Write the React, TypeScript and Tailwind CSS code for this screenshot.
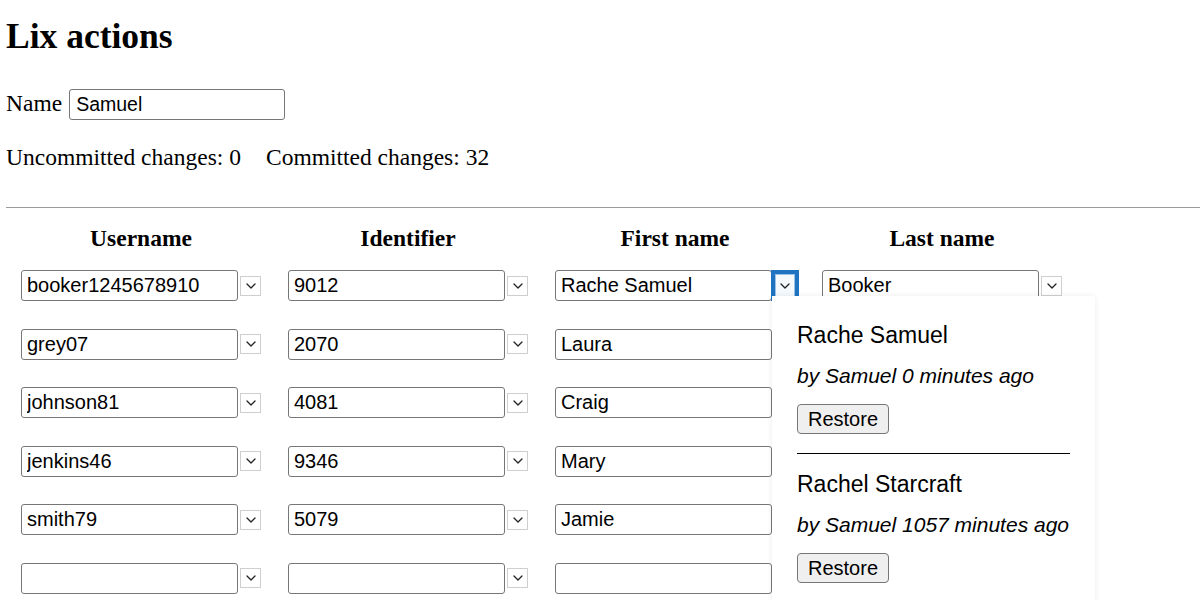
import React from 'react';

const rows = [
  { username: 'booker1245678910', identifier: '9012', first: 'Rache Samuel', last: 'Booker' },
  { username: 'grey07', identifier: '2070', first: 'Laura', last: '' },
  { username: 'johnson81', identifier: '4081', first: 'Craig', last: '' },
  { username: 'jenkins46', identifier: '9346', first: 'Mary', last: '' },
  { username: 'smith79', identifier: '5079', first: 'Jamie', last: '' },
  { username: '', identifier: '', first: '', last: '' },
];

const history = [
  { value: 'Rache Samuel', meta: 'by Samuel 0 minutes ago' },
  { value: 'Rachel Starcraft', meta: 'by Samuel 1057 minutes ago' },
];

const Chevron = () => (
  <svg width="10" height="6" viewBox="0 0 10 6" fill="none" stroke="#222" strokeWidth="1.3" strokeLinecap="round" strokeLinejoin="round">
    <polyline points="1 1 5 5 9 1" />
  </svg>
);

const TextBox: React.FC<{ value: string }> = ({ value }) => (
  <input
    readOnly
    value={value}
    className="w-[217px] h-[31px] border border-[#767676] rounded-[3px] px-[5px] text-[20px] text-black bg-white font-['Liberation_Sans',Arial,sans-serif] outline-none"
  />
);

const HistoryButton: React.FC<{ focused?: boolean }> = ({ focused }) => (
  <button
    className={
      focused
        ? 'ml-[3px] w-[24px] h-[23px] flex items-center justify-center bg-[#f4f9fd] border border-[#9cc3e6] outline-[4px] outline-solid outline-[#1f74c2]'
        : 'ml-[2px] w-[21px] h-[20px] flex items-center justify-center bg-white border border-[#cfcfcf]'
    }
  >
    <Chevron />
  </button>
);

const Popover = () => (
  <div className="absolute left-[217px] top-[26px] w-[323px] h-[340px] bg-white shadow-[0_0_6px_rgba(0,0,0,0.08)] px-[25px] pt-[25px] z-10 font-['Liberation_Sans',Arial,sans-serif] text-black">
    {history.map((h, i) => (
      <div key={h.value}>
        {i > 0 && <div className="border-t-[1.5px] border-black mt-[17px] mb-[16px]" />}
        <div className="text-[23px] leading-[28px]">{h.value}</div>
        <div className="text-[21px] leading-[28px] italic mt-[13px]">{h.meta}</div>
        <button className="mt-[14px] h-[30px] px-[10px] text-[20px] leading-none bg-[#efefef] border border-[#767676] rounded-[4px]">
          Restore
        </button>
      </div>
    ))}
  </div>
);

export default function App() {
  const headers = ['Username', 'Identifier', 'First name', 'Last name'];

  return (
    <div className="w-[1200px] h-[600px] overflow-hidden bg-white text-black pl-[6px] font-['Liberation_Serif','Times_New_Roman',serif] text-[23.5px]">
      <h1 className="pt-[16px] text-[35.5px] leading-[40px] font-bold">Lix actions</h1>

      <div className="mt-[32px] flex items-center gap-[7px] h-[32px]">
        <span>Name</span>
        <input
          readOnly
          value="Samuel"
          className="w-[216px] h-[31px] border border-[#767676] rounded-[3px] px-[6px] text-[19.5px] bg-white font-['Liberation_Sans',Arial,sans-serif] outline-none"
        />
      </div>

      <div className="mt-[23px] leading-[28px] flex">
        <span>Uncommitted changes: 0</span>
        <span className="ml-[25px]">Committed changes: 32</span>
      </div>

      <div className="mt-[36px] border-t-[1.5px] border-[#9a9a9a]" />

      <div className="pl-[15px]">
        <div className="mt-[16px] flex gap-[27px] leading-[28px] font-bold">
          {headers.map(h => (
            <div key={h} className="w-[240px] text-center">{h}</div>
          ))}
        </div>

        <div className="mt-[18px] flex flex-col gap-[27.6px]">
          {rows.map((r, i) => (
            <div key={i} className="flex gap-[27px] h-[31px]">
              <div className="w-[240px] flex items-center">
                <TextBox value={r.username} />
                <HistoryButton />
              </div>
              <div className="w-[240px] flex items-center">
                <TextBox value={r.identifier} />
                <HistoryButton />
              </div>
              <div className="w-[240px] flex items-center relative">
                <TextBox value={r.first} />
                {i === 0 && <HistoryButton focused />}
                {i === 0 && <Popover />}
              </div>
              <div className="w-[240px] flex items-center">
                {i === 0 && (
                  <>
                    <TextBox value={r.last} />
                    <HistoryButton />
                  </>
                )}
              </div>
            </div>
          ))}
        </div>
      </div>
    </div>
  );
}
